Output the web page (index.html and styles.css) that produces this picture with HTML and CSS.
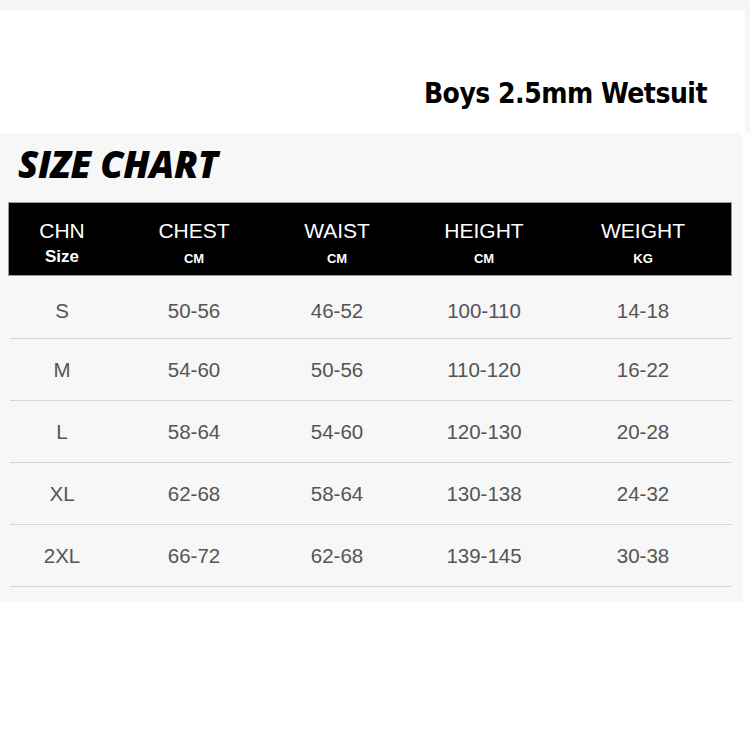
FILE: index.html
```html
<!DOCTYPE html>
<html>
<head>
<meta charset="utf-8">
<link rel="stylesheet" href="styles.css">
</head>
<body>
<div class="page">
  <header class="banner">
    <h1 class="product">Boys 2.5mm Wetsuit</h1>
  </header>
  <section class="chart">
    <h2 class="chart-title">SIZE CHART</h2>
    <div class="table">
      <div class="head">
        <div class="hcell"><span class="hmain">CHN</span><span class="hsize">Size</span></div>
        <div class="hcell"><span class="hmain">CHEST</span><span class="hunit">CM</span></div>
        <div class="hcell"><span class="hmain">WAIST</span><span class="hunit">CM</span></div>
        <div class="hcell"><span class="hmain">HEIGHT</span><span class="hunit">CM</span></div>
        <div class="hcell"><span class="hmain">WEIGHT</span><span class="hunit">KG</span></div>
      </div>
      <div class="row first"><span>S</span><span>50-56</span><span>46-52</span><span>100-110</span><span>14-18</span></div>
      <div class="row"><span>M</span><span>54-60</span><span>50-56</span><span>110-120</span><span>16-22</span></div>
      <div class="row"><span>L</span><span>58-64</span><span>54-60</span><span>120-130</span><span>20-28</span></div>
      <div class="row"><span>XL</span><span>62-68</span><span>58-64</span><span>130-138</span><span>24-32</span></div>
      <div class="row"><span>2XL</span><span>66-72</span><span>62-68</span><span>139-145</span><span>30-38</span></div>
    </div>
  </section>
</div>
</body>
</html>
```
FILE: styles.css
```css
html, body {
  margin: 0;
  padding: 0;
  background: #ffffff;
}
.page {
  width: 750px;
  height: 750px;
  background: #ffffff;
  font-family: "Liberation Sans", Arial, sans-serif;
}
.banner {
  box-sizing: border-box;
  border-top: 10px solid #f5f6f7;
  border-right: 5px solid #f5f6f7;
  height: 133px;
  background: #ffffff;
  display: flex;
  justify-content: flex-end;
  padding: 64px 38px 0 0;
}
.product {
  margin: 0;
  font-family: "DejaVu Sans", sans-serif;
  font-stretch: condensed;
  font-weight: 700;
  font-size: 28px;
  line-height: 40px;
  color: #000;
  letter-spacing: -0.5px;
}
.chart {
  box-sizing: border-box;
  width: 742px;
  height: 469px;
  background: #f7f7f7;
  padding: 11px 0 0 0;
}
.chart-title {
  margin: 0 0 0 18px;
  font-family: "Open Sans", sans-serif;
  font-style: italic;
  font-weight: 800;
  font-size: 37px;
  line-height: 40px;
  letter-spacing: -0.3px;
  color: #000;
}
.table {
  margin: 18px 0 0 8px;
  width: 724px;
}
.head, .row {
  display: grid;
  grid-template-columns: 106px 158px 128px 166px 152px 1fr;
}
.head {
  box-sizing: border-box;
  height: 74px;
  background: #000;
  border: 1px solid #9a9a9a;
  color: #fff;
  align-items: start;
  padding-top: 16px;
}
.hcell {
  display: flex;
  flex-direction: column;
  align-items: center;
}
.hmain {
  font-size: 21px;
  line-height: 24px;
}
.hunit {
  font-size: 13px;
  font-weight: 700;
  line-height: 20px;
  margin-top: 6px;
}
.hsize {
  font-size: 17px;
  font-weight: 700;
  line-height: 20px;
  margin-top: 4px;
}
.row {
  height: 61px;
  margin-left: 2px;
  border-bottom: 1px solid #d6d6d6;
  align-items: center;
  color: #555;
  font-size: 20.5px;
}
.row span {
  text-align: center;
  margin-left: -2px;
}
.row.first {
  height: 54px;
  padding-top: 8px;
  box-sizing: content-box;
}
```
